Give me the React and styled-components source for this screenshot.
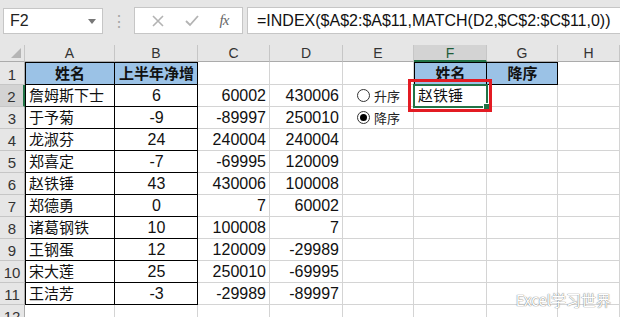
import React from 'react';
import styled, { createGlobalStyle } from 'styled-components';

const GlobalStyle = createGlobalStyle`
	html, body {
		margin: 0;
		padding: 0;
		background: #fff;
		overflow: hidden;
	}
	body {
		font-family: "Liberation Sans", "Noto Sans CJK SC", sans-serif;
	}
`;

const COLS = ['A', 'B', 'C', 'D', 'E', 'F', 'G', 'H'];

const ROWS = [
	['詹姆斯下士', 6, 60002, 430006],
	['于予菊', -9, -89997, 250010],
	['龙淑芬', 24, 240004, 240004],
	['郑喜定', -7, -69995, 120009],
	['赵铁锤', 43, 430006, 100008],
	['郑德勇', 0, 7, 60002],
	['诸葛钢铁', 10, 100008, 7],
	['王钢蛋', 12, 120009, -29989],
	['宋大莲', 25, 250010, -69995],
	['王洁芳', -3, -29989, -89997],
];

const App = () => {
	return (
		<Page>
			<GlobalStyle />
			<FormulaBar>
				<NameBox>
					<span>F2</span>
					<Caret />
				</NameBox>
				<Grip>⋮</Grip>
				<IconBox>
					<svg width="14" height="14" viewBox="0 0 14 14">
						<path d="M2 2 L12 12 M12 2 L2 12" stroke="#b3b3b3" strokeWidth="1.6" />
					</svg>
					<svg width="16" height="14" viewBox="0 0 16 14">
						<path d="M2 7 L6 11 L14 2" stroke="#b3b3b3" strokeWidth="1.8" fill="none" />
					</svg>
					<Fx>fx</Fx>
				</IconBox>
				<FormulaInput>=INDEX($A$2:$A$11,MATCH(D2,$C$2:$C$11,0))</FormulaInput>
			</FormulaBar>

			<Sheet>
				<Corner />
				{COLS.map((c) => (
					<ColHead key={c} $active={c === 'F'}>{c}</ColHead>
				))}

				<RowHead>1</RowHead>
				<Cell $fill="#9bc2e6" $bold $align="center" $edge $top $left>姓名</Cell>
				<Cell $fill="#9bc2e6" $bold $align="center" $edge $top>上半年净增</Cell>
				<Cell />
				<Cell />
				<Cell />
				<Cell $fill="#9bc2e6" $bold $align="center" $edge $top $left>姓名</Cell>
				<Cell $fill="#9bc2e6" $bold $align="center" $edge $top>降序</Cell>
				<Cell />

				{ROWS.map((r, i) => (
					<React.Fragment key={i}>
						<RowHead $active={i === 0}>{i + 2}</RowHead>
						<Cell $edge $left $cjk>{r[0]}</Cell>
						<Cell $edge $align="center">{r[1]}</Cell>
						<Cell $align="flex-end">{r[2]}</Cell>
						<Cell $align="flex-end">{r[3]}</Cell>
						<Cell $mid>
							{i === 0 && (
								<Radio>
									<Dot />
									升序
								</Radio>
							)}
							{i === 1 && (
								<Radio>
									<Dot $checked />
									降序
								</Radio>
							)}
						</Cell>
						<Cell $cjk>
							{i === 0 && (
								<>
									赵铁锤
									<Selection><Handle /></Selection>
									<Highlight />
								</>
							)}
						</Cell>
						<Cell />
						<Cell />
					</React.Fragment>
				))}

				<RowHead>12</RowHead>
				{COLS.map((c) => (
					<Cell key={c} />
				))}
			</Sheet>

			<Watermark>Excel学习世界</Watermark>
		</Page>
	);
};

export default App;

const Page = styled.div`
	position: relative;
	width: 620px;
	height: 317px;
	overflow: hidden;
	background: #fff;
`;

const FormulaBar = styled.div`
	height: 45px;
	box-sizing: border-box;
	background: #e6e6e6;
	padding: 8px 0 0 3px;
	display: flex;
	align-items: flex-start;
`;

const NameBox = styled.div`
	width: 100px;
	height: 26px;
	box-sizing: border-box;
	background: #fff;
	border: 1px solid #c6c6c6;
	display: flex;
	align-items: center;
	justify-content: space-between;
	padding: 0 6px 0 6px;
	font-size: 16px;
	color: #222;
`;

const Caret = styled.span`
	width: 0;
	height: 0;
	border-left: 4px solid transparent;
	border-right: 4px solid transparent;
	border-top: 5px solid #777;
`;

const Grip = styled.div`
	width: 31px;
	height: 26px;
	display: flex;
	align-items: center;
	justify-content: center;
	color: #a6a6a6;
	font-size: 16px;
`;

const IconBox = styled.div`
	width: 109px;
	height: 27px;
	box-sizing: border-box;
	margin-top: -1px;
	background: #fff;
	border: 1px solid #c6c6c6;
	display: flex;
	align-items: center;
	justify-content: space-around;
	padding: 0 4px 0 6px;
`;

const Fx = styled.span`
	font-family: "Liberation Serif", serif;
	font-style: italic;
	font-size: 15px;
	color: #666;
	letter-spacing: -1px;
`;

const FormulaInput = styled.div`
	flex: 1;
	height: 27px;
	margin: -1px 0 0 4px;
	box-sizing: border-box;
	background: #fff;
	border: 1px solid #c6c6c6;
	border-right: none;
	padding-left: 9px;
	display: flex;
	align-items: center;
	font-size: 16px;
	color: #111;
	white-space: nowrap;
`;

const Sheet = styled.div`
	display: grid;
	grid-template-columns: 25px 90px 83px 72px 73px 71px 73px 71px 62px;
	grid-template-rows: 17px 23px repeat(10, 22px) 22px;
	font-size: 16px;
	color: #111;
`;

const Corner = styled.div`
	position: relative;
	background: #e6e6e6;
	border-right: 1px solid #c6c6c6;
	border-bottom: 1px solid #ababab;
	box-sizing: border-box;

	&::after {
		content: '';
		position: absolute;
		right: 3px;
		bottom: 3px;
		border-left: 10px solid transparent;
		border-bottom: 10px solid #b5b5b5;
	}
`;

const ColHead = styled.div`
	box-sizing: border-box;
	background: ${(p) => (p.$active ? '#d3d3d3' : '#e6e6e6')};
	border-right: 1px solid #c6c6c6;
	border-bottom: ${(p) => (p.$active ? '2px solid #217346' : '1px solid #ababab')};
	display: flex;
	align-items: center;
	justify-content: center;
	font-size: 14px;
	color: ${(p) => (p.$active ? '#1e5c38' : '#333')};
`;

const RowHead = styled.div`
	box-sizing: border-box;
	background: ${(p) => (p.$active ? '#d3d3d3' : '#e6e6e6')};
	border-bottom: 1px solid #c6c6c6;
	border-right: ${(p) => (p.$active ? '2px solid #217346' : '1px solid #ababab')};
	display: flex;
	align-items: flex-end;
	justify-content: center;
	padding-bottom: 1px;
	font-size: 15px;
	color: #333;
`;

const Cell = styled.div`
	position: relative;
	box-sizing: border-box;
	background: ${(p) => p.$fill || '#fff'};
	border-right: 1px solid ${(p) => (p.$edge ? '#000' : '#d4d4d4')};
	border-bottom: 1px solid ${(p) => (p.$edge ? '#000' : '#d4d4d4')};
	box-shadow: ${(p) =>
		[p.$top && 'inset 0 1px 0 #000', p.$left && 'inset 1px 0 0 #000'].filter(Boolean).join(', ') || 'none'};
	display: flex;
	align-items: ${(p) => (p.$mid ? 'center' : 'flex-end')};
	justify-content: ${(p) => p.$align || 'flex-start'};
	padding: 0 3px 0 4px;
	font-size: ${(p) => (p.$cjk || p.$bold ? '15px' : '16px')};
	font-weight: ${(p) => (p.$bold ? 700 : 400)};
	line-height: 20px;
	white-space: nowrap;
`;

const Radio = styled.label`
	display: flex;
	align-items: center;
	gap: 4px;
	padding-left: 10px;
	font-family: "Noto Sans CJK SC", sans-serif;
	font-size: 13px;
	color: #222;
	line-height: 14px;
`;

const Dot = styled.span`
	width: 13px;
	height: 13px;
	box-sizing: border-box;
	border-radius: 50%;
	border: 1px solid #333;
	background: #fff;
	display: flex;
	align-items: center;
	justify-content: center;

	&::after {
		content: '';
		width: 7px;
		height: 7px;
		border-radius: 50%;
		background: ${(p) => (p.$checked ? '#000' : 'transparent')};
	}
`;

const Selection = styled.div`
	position: absolute;
	z-index: 2;
	left: -1px;
	top: -1px;
	width: 75px;
	height: 24px;
	box-sizing: border-box;
	border: 2px solid #217346;
	pointer-events: none;
`;

const Handle = styled.span`
	position: absolute;
	right: -4px;
	bottom: -4px;
	width: 5px;
	height: 5px;
	background: #217346;
	border: 1px solid #fff;
`;

const Highlight = styled.div`
	position: absolute;
	z-index: 3;
	left: -6px;
	top: -6px;
	width: 84px;
	height: 33px;
	box-sizing: border-box;
	border: 3px solid #e31b23;
	pointer-events: none;
`;

const Watermark = styled.div`
	position: absolute;
	right: 9px;
	bottom: 9px;
	font-family: "Noto Sans CJK SC", sans-serif;
	font-size: 15px;
	line-height: 16px;
	color: #fff;
	text-shadow: 0 0 1px #7a7a7a, 0 0 1px #7a7a7a;
`;
